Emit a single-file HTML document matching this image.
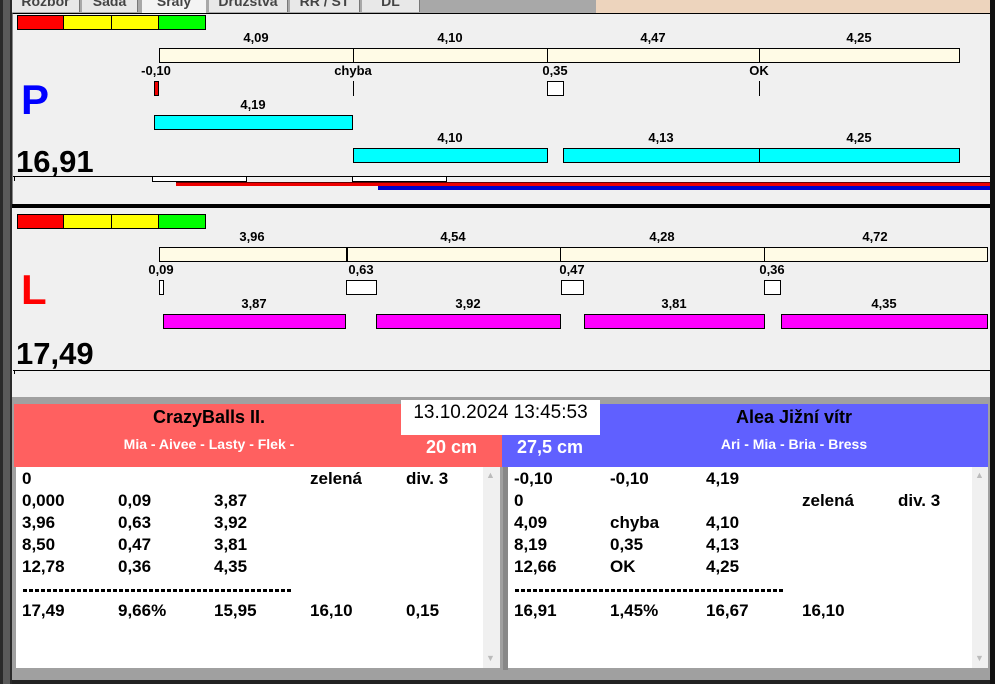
<!DOCTYPE html>
<html><head><meta charset="utf-8"><style>
*{margin:0;padding:0;box-sizing:border-box}
body{width:995px;height:684px;position:relative;overflow:hidden;background:#f0f0f0;font-family:"Liberation Sans",Arial,sans-serif}
div{position:absolute}
.b{border:1px solid #000}
.t{font-weight:bold;font-size:13px;color:#000;text-align:center;width:80px;line-height:14px}
.r{font-weight:bold;font-size:17px;line-height:22px;color:#000;white-space:nowrap}
.d{height:3px;width:270px;background:repeating-linear-gradient(90deg,#000 0 4px,transparent 4px 6px)}
</style></head><body>
<div style="left:0;top:0;width:12px;height:684px;background:#2a2a2a"></div>
<div style="left:3px;top:0;width:7px;height:684px;background:#5a5a5a"></div>
<div style="left:990px;top:0;width:5px;height:684px;background:#111"></div>
<div style="left:12px;top:0;width:978px;height:13px;background:#a8a8a8"></div>
<div style="left:596px;top:0;width:394px;height:13px;background:#edd4bd"></div>
<div style="left:12px;top:0;width:68px;height:12px;background:#e8e8e8;border-right:1px solid #777;font-size:14px;font-weight:bold;color:#444;line-height:2px;text-align:center">Rozbor</div>
<div style="left:82px;top:0;width:56px;height:12px;background:#e8e8e8;border-right:1px solid #777;font-size:14px;font-weight:bold;color:#444;line-height:2px;text-align:center">Sada</div>
<div style="left:142px;top:0;width:64px;height:13px;background:#f4f4f4;font-size:14px;font-weight:bold;color:#444;line-height:2px;text-align:center">Srály</div>
<div style="left:209px;top:0;width:79px;height:12px;background:#e8e8e8;border-right:1px solid #777;font-size:14px;font-weight:bold;color:#444;line-height:2px;text-align:center">Družstva</div>
<div style="left:290px;top:0;width:70px;height:12px;background:#e8e8e8;border-right:1px solid #777;font-size:14px;font-weight:bold;color:#444;line-height:2px;text-align:center">RR / ST</div>
<div style="left:362px;top:0;width:58px;height:12px;background:#e8e8e8;border-right:1px solid #777;font-size:14px;font-weight:bold;color:#444;line-height:2px;text-align:center">DL</div>

<div style="left:12px;top:13px;width:978px;height:193px;background:#f0f0f0;border-top:1px solid #000;border-left:1px solid #888"></div>
<div class="b" style="left:17px;top:15px;width:47px;height:15px;background:#f00"></div>
<div class="b" style="left:63px;top:15px;width:49px;height:15px;background:#ff0"></div>
<div class="b" style="left:111px;top:15px;width:48px;height:15px;background:#ff0"></div>
<div class="b" style="left:158px;top:15px;width:48px;height:15px;background:#0f0"></div>

<div class="t" style="left:216px;top:31px">4,09</div>
<div class="t" style="left:410px;top:31px">4,10</div>
<div class="t" style="left:613px;top:31px">4,47</div>
<div class="t" style="left:819px;top:31px">4,25</div>
<div class="b" style="left:159px;top:48px;width:195px;height:15px;background:#fffbe6"></div>
<div class="b" style="left:353px;top:48px;width:195px;height:15px;background:#fffbe6"></div>
<div class="b" style="left:547px;top:48px;width:213px;height:15px;background:#fffbe6"></div>
<div class="b" style="left:759px;top:48px;width:201px;height:15px;background:#fffbe6"></div>
<div class="t" style="left:116px;top:64px">-0,10</div>
<div class="t" style="left:313px;top:64px">chyba</div>
<div class="t" style="left:515px;top:64px">0,35</div>
<div class="t" style="left:719px;top:64px">OK</div>
<div class="b" style="left:154px;top:81px;width:5px;height:15px;background:#e00"></div>
<div style="left:353px;top:81px;width:1px;height:15px;background:#000"></div>
<div class="b" style="left:547px;top:81px;width:17px;height:15px;background:#fff"></div>
<div style="left:759px;top:81px;width:1px;height:15px;background:#000"></div>
<div style="left:21px;top:76px;font-size:42px;font-weight:bold;color:#0000ff;line-height:48px">P</div>
<div class="t" style="left:213px;top:98px">4,19</div>
<div class="b" style="left:154px;top:115px;width:199px;height:15px;background:#0ff"></div>
<div class="t" style="left:410px;top:131px">4,10</div>
<div class="t" style="left:621px;top:131px">4,13</div>
<div class="t" style="left:819px;top:131px">4,25</div>
<div class="b" style="left:353px;top:148px;width:195px;height:15px;background:#0ff"></div>
<div class="b" style="left:563px;top:148px;width:197px;height:15px;background:#0ff"></div>
<div class="b" style="left:759px;top:148px;width:201px;height:15px;background:#0ff"></div>
<div style="left:16px;top:144px;font-size:31px;font-weight:bold;line-height:36px">16,91</div>
<div style="left:13px;top:176px;width:977px;height:1px;background:#000"></div>
<div style="left:14px;top:176px;width:1px;height:5px;background:#000"></div>
<div class="b" style="left:152px;top:176px;width:95px;height:6px;background:#fff"></div>
<div class="b" style="left:352px;top:176px;width:95px;height:6px;background:#fff"></div>
<div style="left:176px;top:182px;width:814px;height:4px;background:#e00;border-top:1px solid #600"></div>
<div style="left:378px;top:186px;width:612px;height:4px;background:#0000c8"></div>
<div style="left:12px;top:204px;width:978px;height:4px;background:#000"></div>

<div class="b" style="left:17px;top:214px;width:47px;height:15px;background:#f00"></div>
<div class="b" style="left:63px;top:214px;width:49px;height:15px;background:#ff0"></div>
<div class="b" style="left:111px;top:214px;width:48px;height:15px;background:#ff0"></div>
<div class="b" style="left:158px;top:214px;width:48px;height:15px;background:#0f0"></div>
<div class="t" style="left:212px;top:230px">3,96</div>
<div class="t" style="left:413px;top:230px">4,54</div>
<div class="t" style="left:622px;top:230px">4,28</div>
<div class="t" style="left:835px;top:230px">4,72</div>
<div class="b" style="left:159px;top:247px;width:188px;height:15px;background:#fffbe6"></div>
<div class="b" style="left:346px;top:247px;width:215px;height:15px;background:#fffbe6;border-left:2px solid #000"></div>
<div class="b" style="left:560px;top:247px;width:205px;height:15px;background:#fffbe6"></div>
<div class="b" style="left:764px;top:247px;width:224px;height:15px;background:#fffbe6"></div>
<div class="t" style="left:121px;top:263px">0,09</div>
<div class="t" style="left:321px;top:263px">0,63</div>
<div class="t" style="left:532px;top:263px">0,47</div>
<div class="t" style="left:732px;top:263px">0,36</div>
<div class="b" style="left:159px;top:280px;width:5px;height:15px;background:#fff"></div>
<div class="b" style="left:346px;top:280px;width:31px;height:15px;background:#fff"></div>
<div class="b" style="left:561px;top:280px;width:23px;height:15px;background:#fff"></div>
<div class="b" style="left:764px;top:280px;width:17px;height:15px;background:#fff"></div>
<div style="left:21px;top:268px;font-size:42px;font-weight:bold;color:#f00;line-height:44px">L</div>
<div class="t" style="left:214px;top:297px">3,87</div>
<div class="t" style="left:428px;top:297px">3,92</div>
<div class="t" style="left:634px;top:297px">3,81</div>
<div class="t" style="left:844px;top:297px">4,35</div>
<div class="b" style="left:163px;top:314px;width:183px;height:15px;background:#f0f"></div>
<div class="b" style="left:376px;top:314px;width:185px;height:15px;background:#f0f"></div>
<div class="b" style="left:584px;top:314px;width:181px;height:15px;background:#f0f"></div>
<div class="b" style="left:781px;top:314px;width:207px;height:15px;background:#f0f"></div>
<div style="left:16px;top:336px;font-size:31px;font-weight:bold;line-height:36px">17,49</div>
<div style="left:13px;top:370px;width:977px;height:1px;background:#000"></div>
<div style="left:14px;top:370px;width:1px;height:4px;background:#000"></div>

<div style="left:12px;top:397px;width:978px;height:287px;background:#a0a0a0"></div>
<div style="left:14px;top:404px;width:488px;height:63px;background:#ff6060"></div>
<div style="left:502px;top:404px;width:486px;height:63px;background:#6060ff"></div>
<div style="left:14px;top:404px;width:390px;text-align:center;font-size:18px;font-weight:bold;line-height:26px">CrazyBalls II.</div>
<div style="left:14px;top:434px;width:390px;text-align:center;font-size:14px;font-weight:bold;color:#fff;line-height:20px">Mia - Aivee - Lasty - Flek -</div>
<div style="left:426px;top:436px;font-size:18px;font-weight:bold;color:#fff;line-height:22px">20 cm</div>
<div style="left:517px;top:436px;font-size:18px;font-weight:bold;color:#fff;line-height:22px">27,5 cm</div>
<div style="left:600px;top:404px;width:388px;text-align:center;font-size:18px;font-weight:bold;line-height:26px">Alea Jižní vítr</div>
<div style="left:600px;top:434px;width:388px;text-align:center;font-size:14px;font-weight:bold;color:#fff;line-height:20px">Ari - Mia - Bria - Bress</div>
<div style="left:401px;top:400px;width:199px;height:35px;background:#fff;font-size:19px;line-height:26px;text-align:center">13.10.2024 13:45:53</div>

<div style="left:16px;top:467px;width:484px;height:201px;background:#fff"></div>
<div style="left:483px;top:467px;width:17px;height:201px;background:#f0f0f0"></div>
<div style="left:486px;top:470px;font-size:9px;color:#bbb">▲</div>
<div style="left:486px;top:653px;font-size:9px;color:#bbb">▼</div>
<div style="left:503px;top:467px;width:5px;height:203px;background:#888"></div>
<div style="left:508px;top:467px;width:480px;height:201px;background:#fff"></div>
<div style="left:972px;top:467px;width:16px;height:201px;background:#f0f0f0"></div>
<div style="left:975px;top:470px;font-size:9px;color:#bbb">▲</div>
<div style="left:975px;top:653px;font-size:9px;color:#bbb">▼</div>

<div class="r" style="left:22px;top:468px">0</div>
<div class="r" style="left:310px;top:468px">zelená</div>
<div class="r" style="left:406px;top:468px">div. 3</div>
<div class="r" style="left:22px;top:490px">0,000</div><div class="r" style="left:118px;top:490px">0,09</div><div class="r" style="left:214px;top:490px">3,87</div>
<div class="r" style="left:22px;top:512px">3,96</div><div class="r" style="left:118px;top:512px">0,63</div><div class="r" style="left:214px;top:512px">3,92</div>
<div class="r" style="left:22px;top:534px">8,50</div><div class="r" style="left:118px;top:534px">0,47</div><div class="r" style="left:214px;top:534px">3,81</div>
<div class="r" style="left:22px;top:556px">12,78</div><div class="r" style="left:118px;top:556px">0,36</div><div class="r" style="left:214px;top:556px">4,35</div>
<div class="d" style="left:23px;top:589px"></div>
<div class="r" style="left:22px;top:600px">17,49</div><div class="r" style="left:118px;top:600px">9,66%</div><div class="r" style="left:214px;top:600px">15,95</div><div class="r" style="left:310px;top:600px">16,10</div><div class="r" style="left:406px;top:600px">0,15</div>

<div class="r" style="left:514px;top:468px">-0,10</div><div class="r" style="left:610px;top:468px">-0,10</div><div class="r" style="left:706px;top:468px">4,19</div>
<div class="r" style="left:514px;top:490px">0</div><div class="r" style="left:802px;top:490px">zelená</div><div class="r" style="left:898px;top:490px">div. 3</div>
<div class="r" style="left:514px;top:512px">4,09</div><div class="r" style="left:610px;top:512px">chyba</div><div class="r" style="left:706px;top:512px">4,10</div>
<div class="r" style="left:514px;top:534px">8,19</div><div class="r" style="left:610px;top:534px">0,35</div><div class="r" style="left:706px;top:534px">4,13</div>
<div class="r" style="left:514px;top:556px">12,66</div><div class="r" style="left:610px;top:556px">OK</div><div class="r" style="left:706px;top:556px">4,25</div>
<div class="d" style="left:515px;top:589px"></div>
<div class="r" style="left:514px;top:600px">16,91</div><div class="r" style="left:610px;top:600px">1,45%</div><div class="r" style="left:706px;top:600px">16,67</div><div class="r" style="left:802px;top:600px">16,10</div>
<div style="left:12px;top:680px;width:978px;height:4px;background:#222"></div>
</body></html>
